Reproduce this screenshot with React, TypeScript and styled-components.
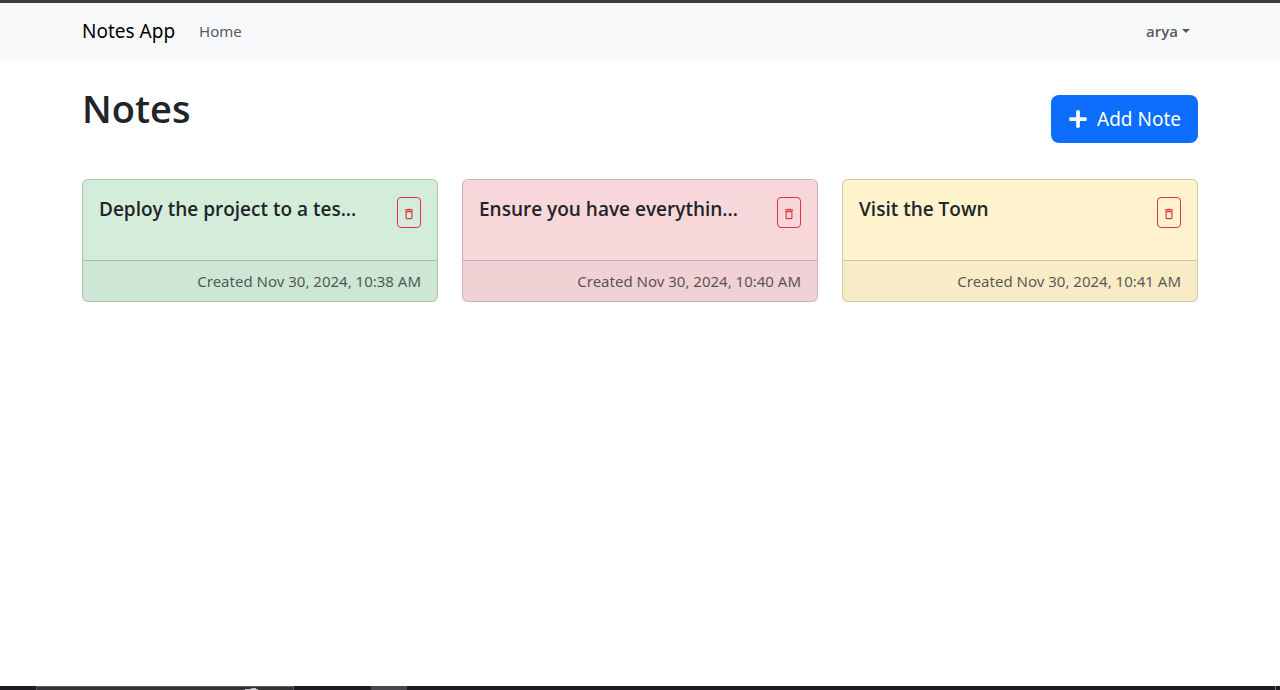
import React from "react";
import styled, { createGlobalStyle } from "styled-components";
import { FaPlus } from "react-icons/fa";
import { MdDeleteOutline } from "react-icons/md";

const GlobalStyle = createGlobalStyle`
  *, *::before, *::after { box-sizing: border-box; }
  body {
    margin: 0;
    background: #fff;
    color: #212529;
    font-family: "Noto Sans", "Open Sans", sans-serif;
    font-size: 15px;
    line-height: 24px;
  }
  h1, h2, p { margin: 0; }
  h1, h2 { font-family: "Open Sans", "Noto Sans", sans-serif; }
  button { font-family: inherit; cursor: pointer; }
`;

const Screen = styled.div`
  min-height: 100vh;
  display: flex;
  flex-direction: column;
`;

const WindowEdge = styled.div`
  height: 3px;
  background: #3c3c3c;
`;

const Container = styled.div`
  width: 100%;
  max-width: 1140px;
  margin: 0 auto;
  padding: 0 12px;
`;

const Navbar = styled.nav`
  background: #f8f9fa;
`;

const NavRow = styled(Container)`
  display: flex;
  align-items: center;
  height: 56px;
`;

const Brand = styled.a`
  margin-right: 24px;
  color: #000;
  font-size: 19px;
  line-height: 30px;
  text-decoration: none;
`;

const NavLink = styled.a`
  color: #595a5b;
  text-decoration: none;
`;

const UserMenu = styled.button`
  display: flex;
  align-items: center;
  gap: 4px;
  margin-left: auto;
  padding: 8px;
  border: 0;
  background: none;
  color: #595a5b;
  font-family: "Open Sans", "Noto Sans", sans-serif;
  font-size: 15px;
  font-weight: 600;
  line-height: 24px;
`;

const Caret = styled.span`
  border-top: 4px solid;
  border-left: 4px solid transparent;
  border-right: 4px solid transparent;
`;

const Main = styled.main`
  flex: 1;
`;

const PageHeader = styled.header`
  display: flex;
  justify-content: space-between;
  align-items: flex-start;
  padding: 26px 0 36px;
`;

const PageTitle = styled.h1`
  font-size: 38px;
  font-weight: 600;
  line-height: 46px;
`;

const AddButton = styled.button`
  display: flex;
  align-items: center;
  gap: 9px;
  height: 48px;
  margin-top: 10px;
  padding: 0 17px;
  border: 0;
  border-radius: 8px;
  background: #0d6efd;
  color: #fff;
  font-size: 19px;
  line-height: 30px;
`;

const NoteGrid = styled.div`
  display: grid;
  grid-template-columns: repeat(auto-fit, minmax(300px, 1fr));
  gap: 24px;
`;

const tones = { green: "#d4edda", red: "#f8d7da", yellow: "#fff3cd" };
type Tone = keyof typeof tones;

const NoteCard = styled.article<{ $tone: Tone }>`
  border: 1px solid rgba(0, 0, 0, 0.176);
  border-radius: 6px;
  background: ${({ $tone }) => tones[$tone]};
  overflow: hidden;
`;

const NoteBody = styled.div`
  display: flex;
  justify-content: space-between;
  align-items: flex-start;
  min-height: 80px;
  padding: 17px 16px 16px;
`;

const NoteTitle = styled.h2`
  font-size: 19px;
  font-weight: 600;
  line-height: 24px;
`;

const DeleteButton = styled.button`
  display: flex;
  align-items: center;
  justify-content: center;
  width: 24px;
  height: 31px;
  padding: 2px 0 0;
  border: 1px solid #dc3545;
  border-radius: 4px;
  background: transparent;
  color: #dc3545;
`;

const NoteFooter = styled.footer`
  padding: 8px 16px;
  border-top: 1px solid rgba(0, 0, 0, 0.176);
  background: rgba(33, 37, 41, 0.03);
  color: rgba(33, 37, 41, 0.75);
  text-align: right;
`;

const Taskbar = styled.div`
  display: flex;
  height: 4px;
  background: #1d1c22;
  overflow: hidden;
`;

const TaskSearch = styled.div`
  display: flex;
  justify-content: flex-end;
  width: 258px;
  margin-left: 36px;
  padding-right: 35px;
  border: 1px solid #58575a;
  border-bottom: 0;
  background: #343336;
`;

const TaskItem = styled.div`
  width: 36px;
  margin-left: 77px;
  background: #4a484d;
`;

const DesktopEdge = styled.div`
  width: 1px;
  margin: 0 4px 0 auto;
  background: #77767a;
`;

const notes: { title: string; created: string; tone: Tone }[] = [
  { title: "Deploy the project to a tes...", created: "Nov 30, 2024, 10:38 AM", tone: "green" },
  { title: "Ensure you have everythin...", created: "Nov 30, 2024, 10:40 AM", tone: "red" },
  { title: "Visit the Town", created: "Nov 30, 2024, 10:41 AM", tone: "yellow" },
];

export default function App() {
  return (
    <>
      <GlobalStyle />
      <Screen>
        <WindowEdge />
        <Navbar>
          <NavRow>
            <Brand href="#">Notes App</Brand>
            <NavLink href="#">Home</NavLink>
            <UserMenu type="button" aria-haspopup="menu">
              arya
              <Caret />
            </UserMenu>
          </NavRow>
        </Navbar>
        <Main>
          <Container>
            <PageHeader>
              <PageTitle>Notes</PageTitle>
              <AddButton type="button">
                <FaPlus size={20} />
                Add Note
              </AddButton>
            </PageHeader>
            <NoteGrid>
              {notes.map((note) => (
                <NoteCard key={note.title} $tone={note.tone}>
                  <NoteBody>
                    <NoteTitle>{note.title}</NoteTitle>
                    <DeleteButton type="button" aria-label={`Delete ${note.title}`}>
                      <MdDeleteOutline size={14} />
                    </DeleteButton>
                  </NoteBody>
                  <NoteFooter>Created {note.created}</NoteFooter>
                </NoteCard>
              ))}
            </NoteGrid>
          </Container>
        </Main>
        <Taskbar>
          <TaskSearch>
            <svg width="13" height="3" viewBox="0 0 13 3" aria-hidden="true">
              <path d="M0 3V2h5l2-1h4v1h2v1z" fill="#c9c8cc" />
            </svg>
          </TaskSearch>
          <TaskItem />
          <DesktopEdge />
        </Taskbar>
      </Screen>
    </>
  );
}
